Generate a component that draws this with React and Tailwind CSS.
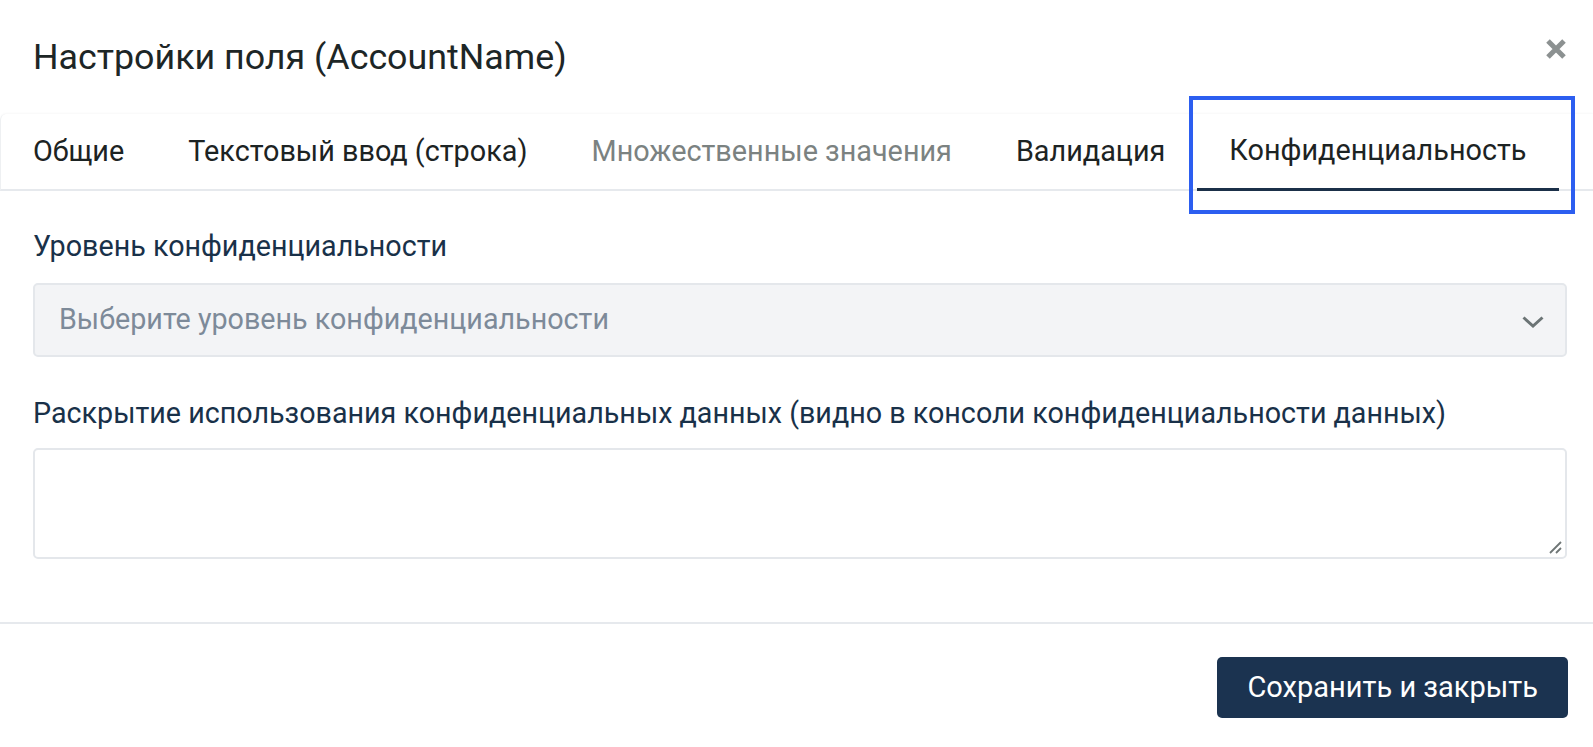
import React, {useState} from "react";

const tabs = [
    {id: 'general', title: 'Общие'},
    {id: 'text', title: 'Текстовый ввод (строка)'},
    {id: 'multi', title: 'Множественные значения', disabled: true},
    {id: 'validation', title: 'Валидация'},
    {id: 'privacy', title: 'Конфиденциальность'},
]

const App = () => {
    const [activeTab, setActiveTab] = useState('privacy')
    const [level, setLevel] = useState('')
    const [disclosure, setDisclosure] = useState('')

    return (
        <div className="w-[1593px] h-[747px] bg-white overflow-hidden font-['Roboto',sans-serif]">
            {/* header */}
            <div className="flex items-start justify-between pl-[33px] pr-[26px] pt-[34px] h-[114px]">
                <h1 className="text-[35.8px] leading-[46px] text-[#1d2626]">Настройки поля (AccountName)</h1>
                <button className="mt-[4px] w-[22px] h-[22px] text-[#8c9191]">
                    <svg viewBox="0 0 22 22" width="22" height="22">
                        <path d="M3 3 L19 19 M19 3 L3 19" stroke="currentColor" strokeWidth="5" />
                    </svg>
                </button>
            </div>

            {/* tabs */}
            <div className="flex h-[77px] border-b-2 border-[#e6e9ed] border-l border-l-[#eef0f2] rounded-tl-md shadow-[0_-1px_2px_rgba(0,0,0,0.03)]">
                {tabs.map((tab) => {
                    const active = tab.id === activeTab
                    return (
                        <button
                            key={tab.id}
                            onClick={() => !tab.disabled && setActiveTab(tab.id)}
                            className={
                                active
                                    ? "relative px-[32px] text-[28.8px] text-[#1c2323] border-b-[3px] border-[#1b3049] -mb-[2px]"
                                    : tab.disabled
                                        ? "px-[32px] text-[28.8px] text-[#7b8281]"
                                        : "px-[32px] text-[28.8px] text-[#1c2323]"
                            }
                        >
                            {tab.title}
                            {active && (
                                <span className="absolute -left-[8px] -right-[16px] -top-[18px] -bottom-[26px] border-4 border-[#2c5ef0] pointer-events-none"></span>
                            )}
                        </button>
                    )
                })}
            </div>

            {/* body */}
            <div className="pl-[33px] pr-[26px]">
                <label className="block mt-[37px] text-[28.7px] leading-[36px] text-[#193149]">Уровень конфиденциальности</label>
                <div className="relative mt-[19px]">
                    <select
                        value={level}
                        onChange={(e) => setLevel(e.target.value)}
                        className="appearance-none w-full h-[74px] pl-[24px] pr-[60px] bg-[#f3f4f6] border-2 border-[#e4e7eb] rounded-[5px] text-[28.7px] text-[#7d8a99] outline-none"
                    >
                        <option value="">Выберите уровень конфиденциальности</option>
                        <option value="public">Публичный</option>
                        <option value="internal">Внутренний</option>
                        <option value="confidential">Конфиденциальный</option>
                    </select>
                    <svg className="absolute right-[23px] top-[33px] pointer-events-none" width="22" height="12" viewBox="0 0 22 12">
                        <path d="M1.5 1.5 L11 10 L20.5 1.5" fill="none" stroke="#6b7475" strokeWidth="3" />
                    </svg>
                </div>

                <label className="block mt-[38px] text-[28.7px] leading-[36px] text-[#193149]">Раскрытие использования конфиденциальных данных (видно в консоли конфиденциальности данных)</label>
                <div className="relative mt-[17px]">
                    <textarea
                        value={disclosure}
                        onChange={(e) => setDisclosure(e.target.value)}
                        className="block w-full h-[111px] resize-none border-2 border-[#e4e7eb] rounded-[5px] px-[24px] py-[16px] text-[28.7px] text-[#193149] outline-none"
                    />
                    <svg className="absolute right-[5px] bottom-[5px] pointer-events-none" width="14" height="14" viewBox="0 0 14 14">
                        <path d="M13 2 L2 13 M13 8 L8 13" stroke="#6f7676" strokeWidth="1.8" />
                    </svg>
                </div>
            </div>

            {/* footer */}
            <div className="mt-[63px] border-t-2 border-[#e6e9ed] flex justify-end pl-[33px] pr-[25px] pt-[33px]">
                <button className="h-[61px] px-[30px] bg-[#1b3350] rounded-[5px] text-white text-[29px]">Сохранить и закрыть</button>
            </div>
        </div>
    )
}
export default App
